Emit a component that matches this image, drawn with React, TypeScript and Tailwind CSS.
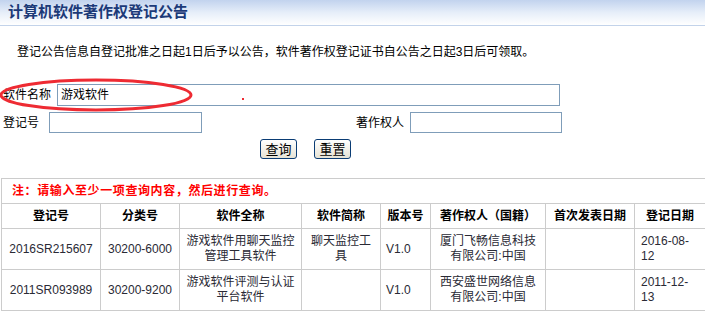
import React from "react";

const cols = [99, 79, 122, 79, 50, 115, 89, 71];

const headers = ["登记号", "分类号", "软件全称", "软件简称", "版本号", "著作权人（国籍）", "首次发表日期", "登记日期"];

const rows = [
  {
    no: "2016SR215607",
    cls: "30200-6000",
    full: ["游戏软件用聊天监控", "管理工具软件"],
    short: ["聊天监控工", "具"],
    ver: "V1.0",
    owner: ["厦门飞畅信息科技", "有限公司:中国"],
    pub: "",
    date: ["2016-08-", "12"],
  },
  {
    no: "2011SR093989",
    cls: "30200-9200",
    full: ["游戏软件评测与认证", "平台软件"],
    short: [],
    ver: "V1.0",
    owner: ["西安盛世网络信息", "有限公司:中国"],
    pub: "",
    date: ["2011-12-", "13"],
  },
];

function Lines({ lines }: { lines: string[] }) {
  return (
    <>
      {lines.map((l) => (
        <div key={l}>{l}</div>
      ))}
    </>
  );
}

export default function App() {
  return (
    <div
      className="w-[705px] h-[313px] bg-white text-[12px] text-black overflow-hidden relative"
      style={{ fontFamily: '"Liberation Sans", "Noto Sans CJK SC", sans-serif' }}
    >
      {/* title bar */}
      <div className="h-[26px] bg-gradient-to-b from-[#c2d3ee] via-[#e6eef9] to-white border-b border-[#c3d3ea] pl-[8px] flex items-center pb-[2px]">
        <span className="text-[15px] font-bold text-[#1c3a78] leading-none">计算机软件著作权登记公告</span>
      </div>

      <p className="mt-[18px] pl-[17px] leading-[16px]">
        登记公告信息自登记批准之日起1日后予以公告，软件著作权登记证书自公告之日起3日后可领取。
      </p>

      {/* search form */}
      <div className="mt-[24px] flex items-center h-[22px]">
        <span className="pl-[3px] w-[57px] leading-[16px]">软件名称</span>
        <div className="w-[503px] h-[22px] border border-[#7f9db9] flex items-center pl-[3px] leading-[16px]">
          游戏软件
        </div>
      </div>

      <div className="mt-[6px] flex items-center h-[21px]">
        <span className="pl-[3px] w-[49px] leading-[16px]">登记号</span>
        <div className="w-[153px] h-[21px] border border-[#7f9db9]" />
        <span className="ml-[154px] w-[54px] leading-[16px]">著作权人</span>
        <div className="w-[152px] h-[21px] border border-[#7f9db9]" />
      </div>

      <div className="mt-[6px] flex h-[20px] pl-[260px] gap-[17px]">
        <button className="w-[37px] h-[20px] rounded-[3px] border border-[#0a3c74] bg-gradient-to-b from-white to-[#e6e3d6] text-[13px] leading-none">
          查询
        </button>
        <button className="w-[37px] h-[20px] rounded-[3px] border border-[#0a3c74] bg-gradient-to-b from-white to-[#e6e3d6] text-[13px] leading-none">
          重置
        </button>
      </div>

      {/* results */}
      <table className="mt-[19px] ml-px w-[704px] border-collapse table-fixed">
        <colgroup>
          {cols.map((w, i) => (
            <col key={i} style={{ width: w }} />
          ))}
        </colgroup>
        <tbody>
          <tr className="h-[25px]">
            <td colSpan={8} className="border border-[#cccccc] pl-[10px] text-[#ff0000] font-bold tracking-[0.6px] leading-[16px]">
              注：请输入至少一项查询内容，然后进行查询。
            </td>
          </tr>
          <tr className="h-[25px]">
            {headers.map((h) => (
              <td key={h} className="border border-[#cccccc] text-center font-bold leading-[16px] whitespace-nowrap">
                {h}
              </td>
            ))}
          </tr>
          {rows.map((r) => (
            <tr key={r.no} className="h-[41px] text-[#2a2a35] leading-[15px]">
              <td className="border border-[#cccccc] text-center">{r.no}</td>
              <td className="border border-[#cccccc] text-center">{r.cls}</td>
              <td className="border border-[#cccccc] text-center">
                <Lines lines={r.full} />
              </td>
              <td className="border border-[#cccccc] text-center">
                <Lines lines={r.short} />
              </td>
              <td className="border border-[#cccccc] pl-[5px]">{r.ver}</td>
              <td className="border border-[#cccccc] text-center">
                <Lines lines={r.owner} />
              </td>
              <td className="border border-[#cccccc]">{r.pub}</td>
              <td className="border border-[#cccccc] pl-[6px]">
                <Lines lines={r.date} />
              </td>
            </tr>
          ))}
        </tbody>
      </table>

      {/* hand-drawn red annotation */}
      <svg className="absolute left-0 top-[78px] pointer-events-none" width="200" height="36" viewBox="0 0 200 36">
        <ellipse cx="96" cy="17" rx="95" ry="15" fill="none" stroke="#ee2b33" strokeWidth="3" />
      </svg>
      <span className="absolute left-[242px] top-[98px] w-[2px] h-[2px] bg-[#ee2b33]" />
    </div>
  );
}
